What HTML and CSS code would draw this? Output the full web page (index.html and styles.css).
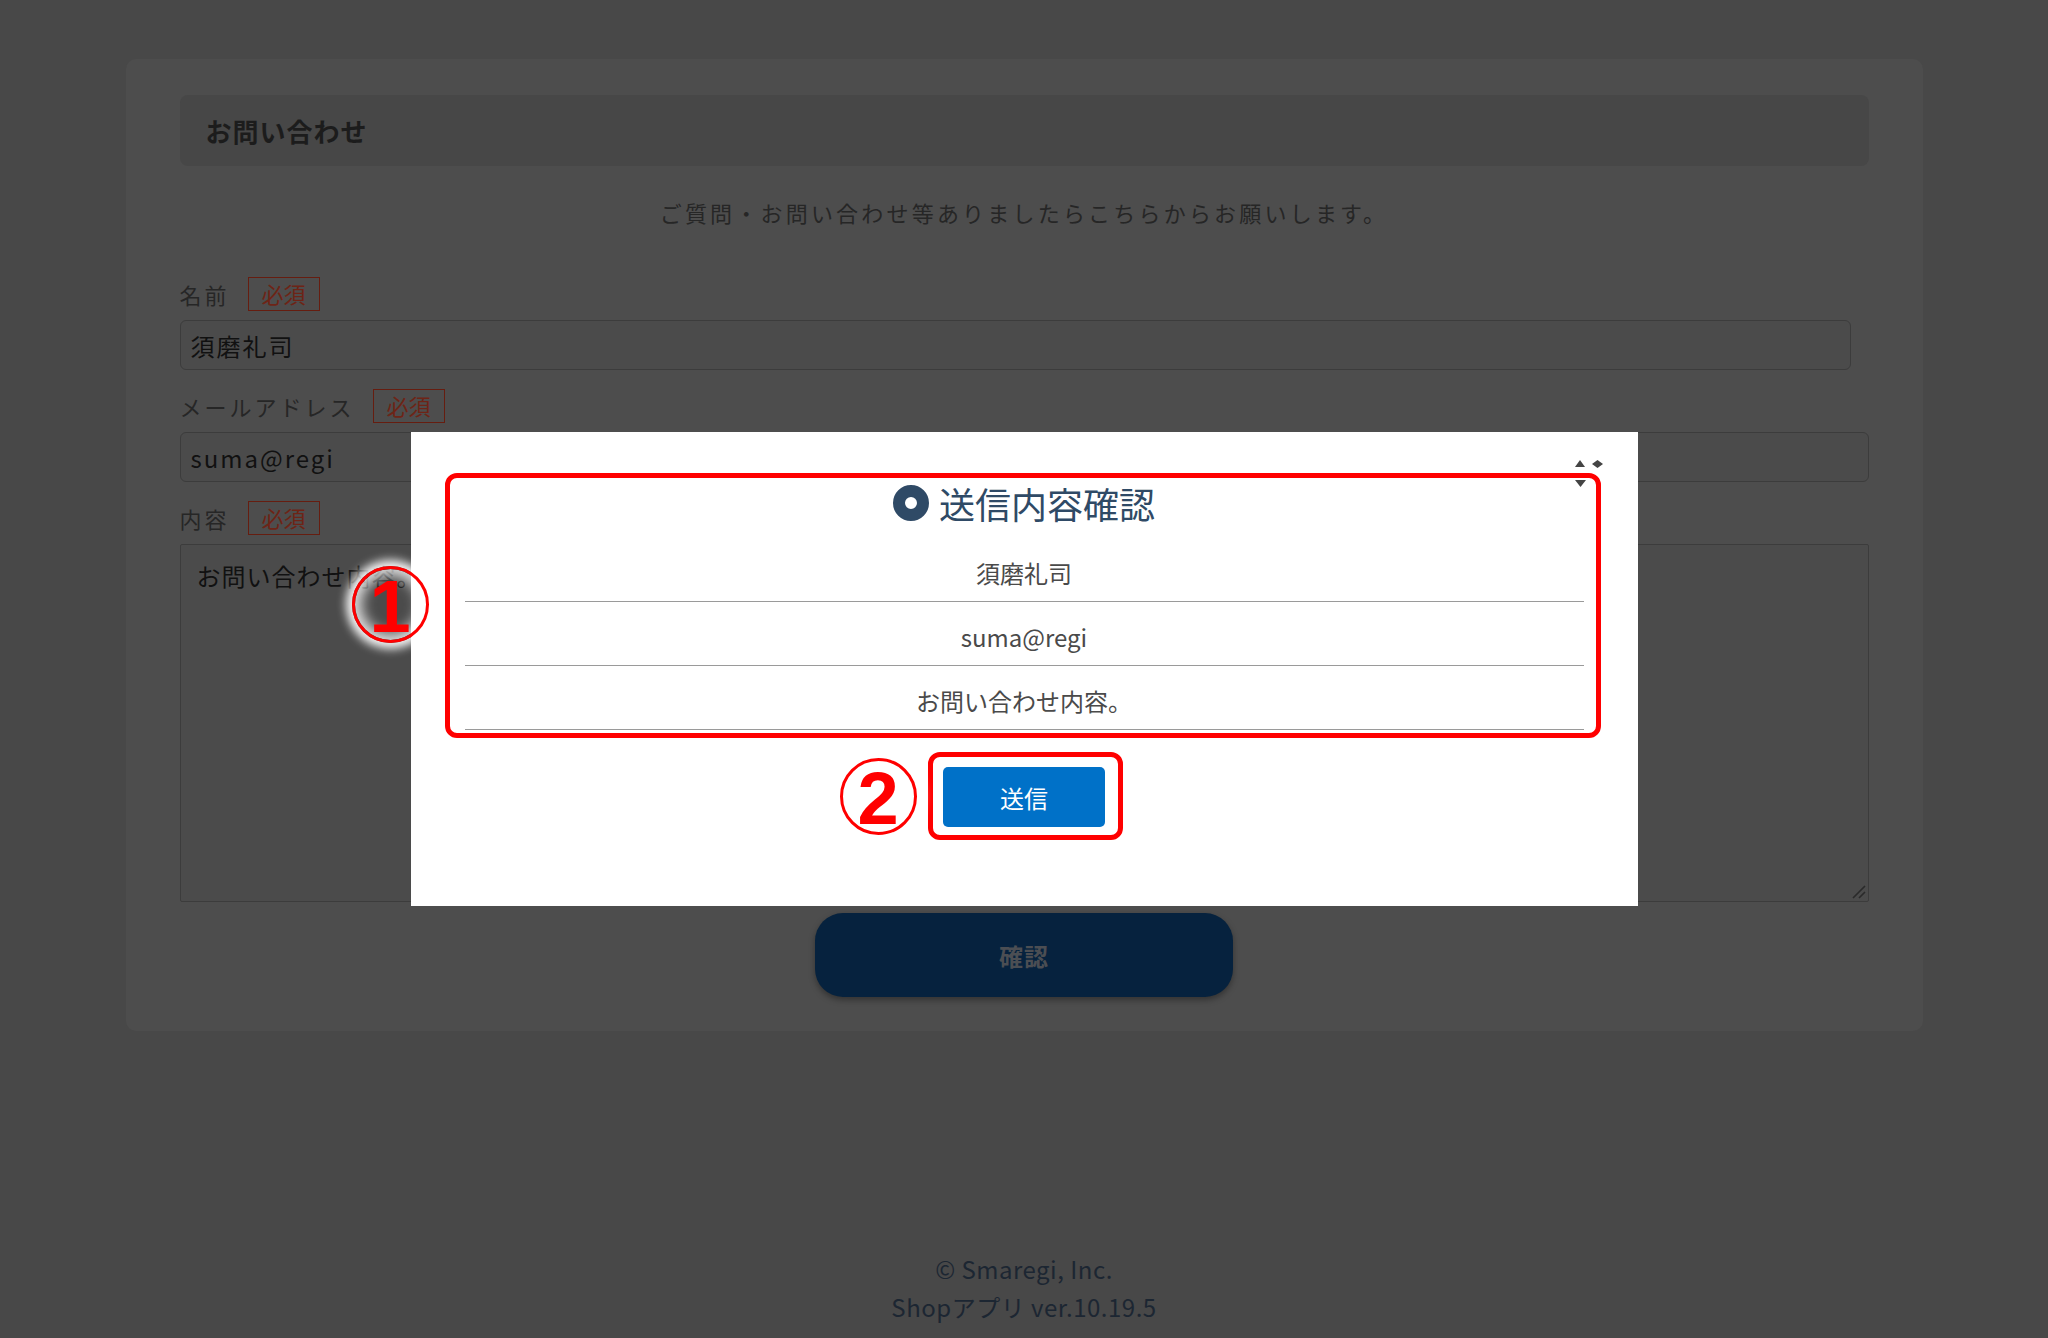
FILE: index.html
```html
<!DOCTYPE html>
<html lang="ja">
<head>
<meta charset="utf-8">
<title>お問い合わせ</title>
<link rel="stylesheet" href="styles.css">
</head>
<body>
<div class="page">
  <div class="card">
    <div class="card-head">お問い合わせ</div>
    <p class="lead">ご質問・お問い合わせ等ありましたらこちらからお願いします。</p>

    <div class="field-label first"><span class="label-text">名前</span><span class="badge">必須</span></div>
    <input class="text-input narrow" type="text" value="須磨礼司">

    <div class="field-label"><span class="label-text">メールアドレス</span><span class="badge">必須</span></div>
    <input class="text-input" type="text" value="suma@regi">

    <div class="field-label"><span class="label-text">内容</span><span class="badge">必須</span></div>
    <div class="area-wrap">
      <textarea class="text-area">お問い合わせ内容。</textarea>
      <svg class="grip" width="14" height="14" viewBox="0 0 14 14" aria-hidden="true">
        <path d="M1 13 L13 1 M7 13 L13 7" stroke="#2a2a2a" stroke-width="1.6" fill="none"/>
      </svg>
    </div>

    <div class="confirm-wrap"><button class="confirm-btn" type="button">確認</button></div>
  </div>

  <footer class="footer">
    <div>© Smaregi, Inc.</div>
    <div>Shopアプリ ver.10.19.5</div>
  </footer>
</div>

<div class="overlay">
  <div class="modal">
    <svg class="modal-toggle" width="32" height="30" viewBox="0 0 32 30" aria-hidden="true">
      <path d="M1 8 L6 1 L11 8 Z" fill="#444"/>
      <path d="M18 5 L23.5 1 L29 5 L23.5 9 Z" fill="#444"/>
      <path d="M1 21 L12 21 L6.5 28 Z" fill="#444"/>
    </svg>
    <h2 class="modal-title"><span class="title-icon"></span>送信内容確認</h2>
    <div class="confirm-rows">
      <div class="confirm-row">須磨礼司</div>
      <div class="confirm-row">suma@regi</div>
      <div class="confirm-row">お問い合わせ内容。</div>
    </div>
    <div class="send-wrap"><button class="send-btn" type="button">送信</button></div>

    <div class="note-box box-one"></div>
    <div class="note-box box-two"></div>
    <div class="note-num num-one"><span>1</span></div>
    <div class="note-num num-two"><span>2</span></div>
  </div>
</div>
</body>
</html>
```

FILE: styles.css
```css
html, body {
  margin: 0;
  padding: 0;
}
body {
  width: 2048px;
  height: 1338px;
  overflow: hidden;
  background: #484848;
  font-family: "Noto Sans CJK JP", "Noto Sans", sans-serif;
  color: #2a2a2a;
}
.page {
  padding-top: 59px;
}
.card {
  width: 1797px;
  box-sizing: border-box;
  margin: 0 auto;
  padding: 36px 54px 34px;
  background: #4d4d4d;
  border-radius: 10px;
}
.card-head {
  height: 71px;
  display: flex;
  align-items: center;
  padding-left: 26px;
  background: #474747;
  border-radius: 8px;
  font-size: 26px;
  font-weight: 700;
  letter-spacing: 1px;
  color: #1c1c1c;
}
.lead {
  margin: 29px 0 0;
  text-align: center;
  font-size: 22px;
  line-height: 34px;
  letter-spacing: 3.2px;
  color: #262626;
}
.field-label {
  display: flex;
  align-items: center;
  gap: 18px;
  height: 34px;
  margin-top: 19px;
}
.field-label.first {
  margin-top: 48px;
}
.label-text {
  font-size: 22px;
  letter-spacing: 3px;
  color: #262626;
}
.badge {
  box-sizing: border-box;
  height: 34px;
  padding: 0 13px;
  border: 1px solid #661d10;
  font-size: 22px;
  line-height: 31px;
  color: #6e2416;
}
.text-input {
  display: block;
  box-sizing: border-box;
  width: 100%;
  height: 50px;
  margin: 9px 0 0;
  padding: 0 10px;
  background: #4b4b4b;
  border: 1px solid #3c3c3c;
  border-radius: 6px;
  font-family: "Noto Sans CJK JP", "Noto Sans", sans-serif;
  font-size: 24px;
  letter-spacing: 2px;
  color: #111111;
  outline: none;
}
.text-input.narrow {
  width: calc(100% - 18px);
}
.area-wrap {
  position: relative;
  margin-top: 9px;
}
.text-area {
  display: block;
  box-sizing: border-box;
  width: 100%;
  height: 358px;
  margin: 0;
  padding: 12px 16px;
  background: #4b4b4b;
  border: 1px solid #3c3c3c;
  border-radius: 2px;
  font-family: "Noto Sans CJK JP", "Noto Sans", sans-serif;
  font-size: 24px;
  line-height: 38px;
  letter-spacing: 1px;
  color: #111111;
  resize: none;
}
.grip {
  position: absolute;
  right: 3px;
  bottom: 3px;
}
.confirm-wrap {
  display: flex;
  justify-content: center;
  margin-top: 11px;
}
.confirm-btn {
  width: 418px;
  height: 84px;
  border: none;
  border-radius: 28px;
  background: #06223e;
  box-shadow: 0 3px 6px rgba(0, 0, 0, 0.35);
  font-family: "Noto Sans CJK JP", "Noto Sans", sans-serif;
  font-size: 24px;
  font-weight: 700;
  letter-spacing: 1px;
  color: #4b4e53;
}
.footer {
  margin-top: 219px;
  text-align: center;
  font-size: 24px;
  line-height: 38px;
  letter-spacing: 0.5px;
  color: #1c2632;
}

/* modal */
.overlay {
  position: fixed;
  inset: 0;
  display: flex;
  align-items: center;
  justify-content: center;
}
.modal {
  position: relative;
  width: 1227px;
  height: 474px;
  box-sizing: border-box;
  padding: 46px 54px 0;
  background: #ffffff;
}
.modal-toggle {
  position: absolute;
  left: 1163px;
  top: 27px;
}
.modal-title {
  margin: 0;
  display: flex;
  align-items: center;
  justify-content: center;
  gap: 10px;
  font-size: 36px;
  font-weight: 400;
  line-height: 50px;
  color: #2f4a66;
}
.title-icon {
  box-sizing: border-box;
  width: 36px;
  height: 36px;
  border-radius: 50%;
  border: 12px solid #2f4a66;
  background: #ffffff;
}
.confirm-rows {
  margin-top: 10px;
}
.confirm-row {
  height: 64px;
  box-sizing: border-box;
  padding-top: 9px;
  border-bottom: 1.5px solid #9a9a9a;
  text-align: center;
  font-size: 24px;
  line-height: 52px;
  color: #4a4a4a;
}
.send-wrap {
  display: flex;
  justify-content: center;
  margin-top: 37px;
}
.send-btn {
  width: 162px;
  height: 60px;
  border: none;
  border-radius: 5px;
  background: #0071c8;
  font-family: "Noto Sans CJK JP", "Noto Sans", sans-serif;
  font-size: 24px;
  color: #ffffff;
}

/* annotations */
.note-box {
  position: absolute;
  box-sizing: border-box;
  border: 5px solid #ff0000;
  border-radius: 12px;
}
.box-one {
  left: 34px;
  top: 41px;
  width: 1156px;
  height: 265px;
}
.box-two {
  left: 517px;
  top: 320px;
  width: 195px;
  height: 88px;
}
.note-num {
  position: absolute;
  box-sizing: border-box;
  width: 77px;
  height: 77px;
  border: 3px solid #ff0000;
  border-radius: 50%;
  display: flex;
  align-items: center;
  justify-content: center;
  box-shadow: 0 0 10px 6px rgba(255, 255, 255, 0.95), inset 0 0 14px 6px rgba(255, 255, 255, 0.85);
  font-family: "Liberation Sans", Arial, sans-serif;
  font-weight: 700;
  font-size: 74px;
  line-height: 1;
  color: #ff0000;
}
.note-num span {
  display: block;
  margin-top: 4px;
}
.num-one {
  left: -59px;
  top: 134px;
}
.num-two {
  left: 429px;
  top: 326px;
}
```
